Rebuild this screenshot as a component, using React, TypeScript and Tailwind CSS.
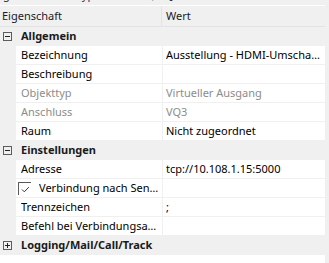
import React from "react";

type Row =
  | { kind: "group"; label: string; open: boolean }
  | { kind: "prop"; label: string; value?: string; disabled?: boolean; check?: boolean };

const rows: Row[] = [
  { kind: "group", label: "Allgemein", open: true },
  { kind: "prop", label: "Bezeichnung", value: "Ausstellung - HDMI-Umschalter Raum 3" },
  { kind: "prop", label: "Beschreibung", value: "" },
  { kind: "prop", label: "Objekttyp", value: "Virtueller Ausgang", disabled: true },
  { kind: "prop", label: "Anschluss", value: "VQ3", disabled: true },
  { kind: "prop", label: "Raum", value: "Nicht zugeordnet" },
  { kind: "group", label: "Einstellungen", open: true },
  { kind: "prop", label: "Adresse", value: "tcp://10.108.1.15:5000" },
  { kind: "prop", label: "Verbindung nach Senden trennen", value: "", check: true },
  { kind: "prop", label: "Trennzeichen", value: ";" },
  { kind: "prop", label: "Befehl bei Verbindungsaufbau", value: "" },
  { kind: "group", label: "Logging/Mail/Call/Track", open: false },
];

function Toggle({ open }: { open: boolean }) {
  return (
    <svg width="9" height="9" viewBox="0 0 9 9" className="block">
      <rect x="0.5" y="0.5" width="8" height="8" fill="none" stroke="#5c5c5c" />
      <line x1="2" y1="4.5" x2="7" y2="4.5" stroke="#222" />
      {!open && <line x1="4.5" y1="2" x2="4.5" y2="7" stroke="#222" />}
    </svg>
  );
}

function Check() {
  return (
    <div className="w-[13px] h-[13px] border-l border-t border-[#5a5a5a] relative shrink-0">
      <svg width="13" height="13" viewBox="0 0 13 13" className="absolute left-0 top-0">
        <path d="M3 6.5 L5.3 8.8 L9.8 4.2" fill="none" stroke="#333" strokeWidth="1" />
      </svg>
    </div>
  );
}

export default function App() {
  return (
    <div
      className="w-[329px] h-[263px] bg-[#f0f0f0] overflow-hidden text-[11px] text-black"
      style={{ fontFamily: '"Noto Sans", "Liberation Sans", sans-serif' }}
    >
      {/* cut-off strip above */}
      <div className="h-[5px] overflow-hidden">
        <div className="flex -mt-[13px] h-[16px] leading-[16px] text-[#333]">
          <span className="ml-[3px]">g</span>
          <span className="ml-[72px]">yp</span>
          <span className="ml-[56px]">(</span>
          <span className="ml-[16px]">]</span>
        </div>
      </div>
      {/* header */}
      <div className="w-[325px] h-px bg-white" />
      <div className="flex w-[325px] h-[21px] border-b border-[#e3e3e3] bg-[#f0f0f0]">
        <div className="w-[162px] pl-[2px] flex items-center border-r border-[#e3e3e3] text-[#1a1a2a]">
          Eigenschaft
        </div>
        <div className="flex-1 pl-[4px] flex items-center text-[#1a1a2a]">Wert</div>
      </div>
      {/* rows */}
      <div className="flex flex-col">
        {rows.map((r, i) =>
          r.kind === "group" ? (
            <div key={i} className="h-[19px] flex items-center">
              <div className="w-[21px] pl-[3px] flex items-center">
                <Toggle open={r.open} />
              </div>
              <span className="font-bold text-[#1a1a1a]">{r.label}</span>
            </div>
          ) : (
            <div key={i} className="h-[19px] pb-px flex">
              <div className="w-[16px] shrink-0" />
              <div
                className={
                  "w-[146px] shrink-0 bg-white flex items-center gap-[8px] overflow-hidden whitespace-nowrap " +
                  (r.check ? "pl-[2px]" : "pl-[5px]")
                }
              >
                {r.check && <Check />}
                <span
                  className={
                    "block overflow-hidden text-ellipsis whitespace-nowrap pr-[2px] " +
                    (r.disabled ? "text-[#8c8c8c]" : "")
                  }
                >
                  {r.label}
                </span>
              </div>
              <div className="w-px shrink-0" />
              <div className="w-[162px] shrink-0 bg-white flex items-center pl-[3px] overflow-hidden">
                <span
                  className={
                    "block overflow-hidden text-ellipsis whitespace-nowrap pr-[3px] " +
                    (r.disabled ? "text-[#8c8c8c]" : "")
                  }
                >
                  {r.value}
                </span>
              </div>
            </div>
          )
        )}
        <div className="w-[325px] h-[10px] bg-white" />
      </div>
    </div>
  );
}
